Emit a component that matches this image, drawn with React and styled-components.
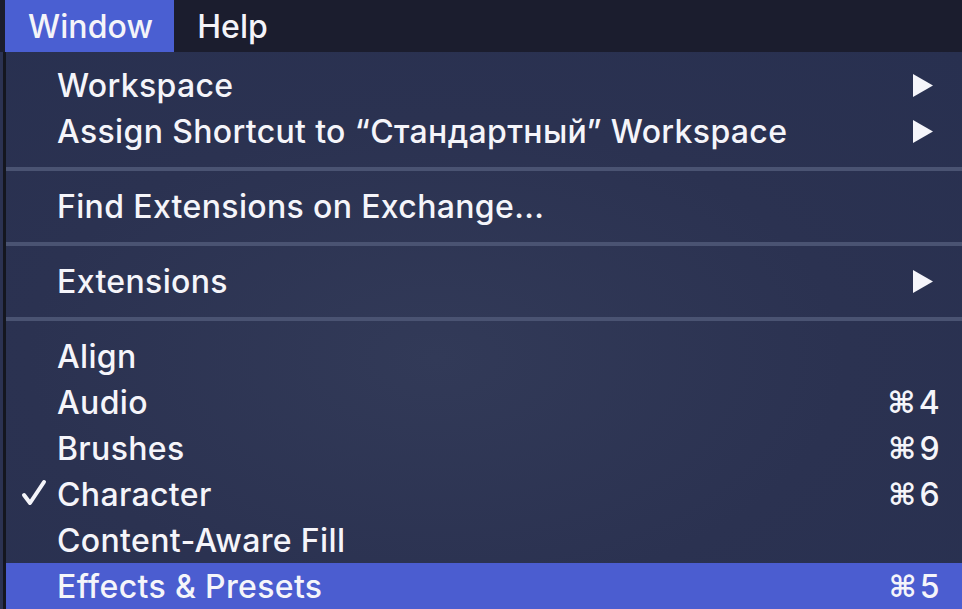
import styled, { createGlobalStyle } from 'styled-components'

const GlobalStyle = createGlobalStyle`
  html, body {
    margin: 0;
    padding: 0;
    background: #2b3251;
    overflow: hidden;
  }
  body {
    font-family: Inter, "Noto Sans", "DejaVu Sans", sans-serif;
    -webkit-font-smoothing: antialiased;
  }
`

const Screen = styled.div`
  width: 962px;
  height: 609px;
  display: flex;
  flex-direction: column;
  overflow: hidden;
`

// Top menu bar
const MenuBar = styled.div`
  height: 52px;
  flex: none;
  display: flex;
  align-items: stretch;
  padding-left: 5px;
  background: #1b1d2e;
`

const BarItem = styled.div`
  display: flex;
  align-items: center;
  padding: 0 21px 0 23px;
  font-size: 32px;
  font-weight: 500;
  letter-spacing: 0.1px;
  color: #f4f4f9;
  background: ${p => (p.$active ? '#4a5fd2' : 'transparent')};
`

const Body = styled.div`
  flex: 1;
  display: flex;
  padding-left: 3px;
`

// Dropdown panel
const Menu = styled.div`
  flex: 1;
  border-left: 3px solid #14161f;
  padding-top: 10px;
  background: radial-gradient(ellipse at 45% 55%, #323a58 0%, #2b3251 55%, #283050 100%);
`

const Row = styled.div`
  height: 46px;
  display: flex;
  align-items: center;
  padding: 0 22px 0 51px;
  position: relative;
  font-size: 32px;
  font-weight: 500;
  letter-spacing: 0.35px;
  color: #f5f5fa;
  background: ${p => (p.$highlight ? '#4b5dd0' : 'transparent')};
`

const Label = styled.span`
  flex: 1;
  white-space: nowrap;
`

const Check = styled.svg`
  position: absolute;
  left: 13px;
  top: 7px;
  width: 30px;
  height: 30px;
`

const Shortcut = styled.span`
  display: flex;
  align-items: center;
  gap: 3px;
`

const Cmd = styled.span`
  font-family: "DejaVu Sans", sans-serif;
  font-size: 30px;
  font-weight: bold;
`

const Arrow = styled.svg`
  width: 20px;
  height: 23px;
  margin-right: 7px;
`

const Separator = styled.div`
  height: 4px;
  margin: 13px 0 12px;
  background: #4a5372;
`

const SubArrow = () => (
  <Arrow viewBox="0 0 20 23">
    <polygon points="0,0 20,11.5 0,23" fill="#f5f5fa" />
  </Arrow>
)

const CheckMark = () => (
  <Check viewBox="0 0 30 30">
    <polyline
      points="5,17 11,25 25,4"
      fill="none"
      stroke="#f5f5fa"
      strokeWidth="4"
      strokeLinecap="round"
      strokeLinejoin="round"
    />
  </Check>
)

const groups = [
  [
    { label: 'Workspace', sub: true },
    { label: 'Assign Shortcut to “Стандартный” Workspace', sub: true },
  ],
  [{ label: 'Find Extensions on Exchange...' }],
  [{ label: 'Extensions', sub: true }],
  [
    { label: 'Align' },
    { label: 'Audio', key: '4' },
    { label: 'Brushes', key: '9' },
    { label: 'Character', key: '6', checked: true },
    { label: 'Content-Aware Fill' },
    { label: 'Effects & Presets', key: '5', highlight: true },
  ],
]

function App() {
  return (
    <>
      <GlobalStyle />
      <Screen>
        <MenuBar>
          <BarItem $active>Window</BarItem>
          <BarItem>Help</BarItem>
        </MenuBar>
        <Body>
          <Menu>
            {groups.map((items, gi) => (
              <div key={gi}>
                {gi > 0 && <Separator />}
                {items.map(item => (
                  <Row key={item.label} $highlight={item.highlight}>
                    {item.checked && <CheckMark />}
                    <Label>{item.label}</Label>
                    {item.sub && <SubArrow />}
                    {item.key && (
                      <Shortcut>
                        <Cmd>⌘</Cmd>
                        {item.key}
                      </Shortcut>
                    )}
                  </Row>
                ))}
              </div>
            ))}
          </Menu>
        </Body>
      </Screen>
    </>
  )
}

export default App
